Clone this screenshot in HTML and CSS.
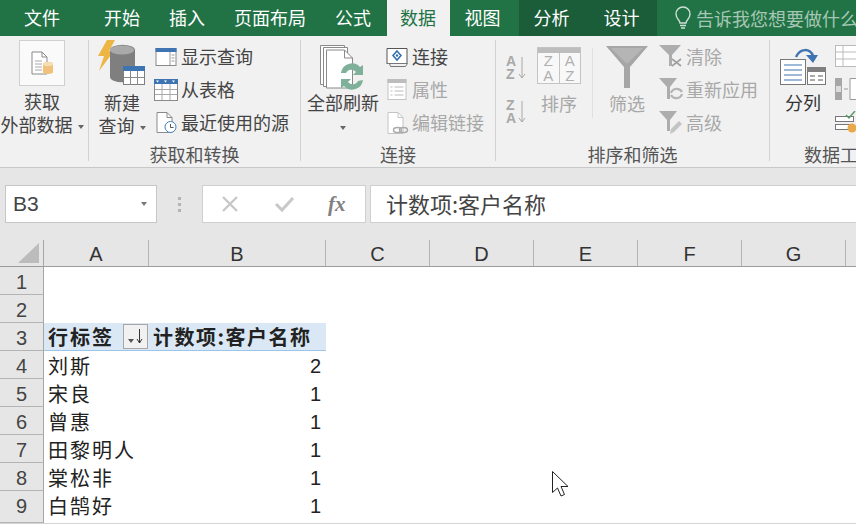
FILE: index.html
```html
<!DOCTYPE html>
<html>
<head>
    <title>数据透视表</title>
    <link rel="stylesheet" href="styles.css">
</head>
<body>
    <div class="tabs">
        <span class="tab tab-file">文件</span>
        <span class="tab">开始</span>
        <span class="tab">插入</span>
        <span class="tab">页面布局</span>
        <span class="tab">公式</span>
        <span class="tab active">数据</span>
        <span class="tab">视图</span>
        <div class="context-tabs">
            <span class="tab">分析</span>
            <span class="tab">设计</span>
        </div>
        <div class="tell-me">
            <svg width="16" height="24" viewBox="0 0 16 24"><path d="M5 17c0-3-4-4-4-9a7 7 0 0 1 14 0c0 5-4 6-4 9z" fill="none" stroke="#cfe0d6" stroke-width="1.4"/><path d="M5 19.500h6M6 22h4" stroke="#cfe0d6" stroke-width="1.600"/></svg>
            <span>告诉我您想要做什么</span>
        </div>
    </div>

    <div class="ribbon">
        <div class="group group-ext">
            <div class="group-body column-center">
                <div class="icon-box">
                    <svg width="24" height="24" viewBox="0 0 24 24"><path d="M2 1h10l5 5v17H2z" fill="#fff" stroke="#8a8a8a"/><path d="M12 1v5h5" fill="none" stroke="#8a8a8a"/><path d="M5 10h7M5 13h7M5 16h7M5 19h7" stroke="#a6a6a6"/><path d="M13 13a5 2 0 0 1 10 0v8a5 2 0 0 1-10 0z" fill="#f0c27b"/><ellipse cx="18" cy="13" rx="5" ry="2" fill="#f7dfb5"/></svg>
                </div>
                <div class="big-label ext-label">获取<br>外部数据<i class="caret"></i></div>
            </div>
        </div>

        <div class="group group-get">
            <div class="group-body">
                <div class="big-button query-button">
                    <svg width="50" height="49" viewBox="0 0 50 49"><path d="M10 0h8l-6 11h5L2 31l5-15H1z" fill="#edb544"/><path d="M13 10a12 5 0 0 1 25 0v27a12 5 0 0 1-25 0z" fill="#7f7f7f"/><ellipse cx="25" cy="10" rx="12" ry="4.500" fill="#a9a9a9"/><rect x="26.500" y="26.500" width="21" height="18" fill="#fff" stroke="#7f7f7f"/><path d="M26 26h22v5H26z" fill="#3f74b2"/><path d="M33.500 31v14M40.500 31v14M27 37.500h20" stroke="#8a8a8a"/></svg>
                    <div class="big-label">新建<br>查询<i class="caret"></i></div>
                </div>
                <div class="small-list">
                    <div class="small-row">
                        <svg width="23" height="20" viewBox="0 0 23 20"><rect x="1.500" y="1.500" width="20" height="17" fill="#fff" stroke="#8a8a8a"/><path d="M1 1h21v4H1z" fill="#3f74b2"/><path d="M15.500 5v13M17 8h3M17 11h3M17 14h3" stroke="#9a9a9a"/></svg>
                        <span>显示查询</span>
                    </div>
                    <div class="small-row">
                        <svg width="24" height="24" viewBox="0 0 24 24"><rect x=".5" y="1.500" width="23" height="21" fill="#fff" stroke="#8a8a8a"/><path d="M0 1h24v5H0z" fill="#3f74b2"/><path d="M2 2.500h3L3.500 4.500zM10 2.500h3l-1.500 2zM18 2.500h3l-1.500 2z" fill="#fff"/><path d="M8 6v16M16 6v16M1 11.500h22M1 16.500h22" stroke="#a8a8a8"/></svg>
                        <span>从表格</span>
                    </div>
                    <div class="small-row">
                        <svg width="23" height="23" viewBox="0 0 23 23"><path d="M2.500 1.500h10l5 5v15h-15z" fill="#fff" stroke="#8a8a8a"/><path d="M12.500 1.500v5h5" fill="none" stroke="#8a8a8a"/><circle cx="16" cy="16" r="5.500" fill="#fff" stroke="#4a7fb5"/><path d="M16 13v3.500h3" fill="none" stroke="#555"/></svg>
                        <span>最近使用的源</span>
                    </div>
                </div>
            </div>
            <div class="group-label">获取和转换</div>
        </div>

        <div class="group group-conn">
            <div class="group-body">
                <div class="big-button refresh-button">
                    <svg width="46" height="46" viewBox="0 0 46 46"><path d="M.5.500h24v39H.5z" fill="#fff" stroke="#8a8a8a"/><path d="M3.500 2.500h24v39h-24z" fill="#fff" stroke="#8a8a8a"/><path d="M6.500 5h18l8 8v30h-26z" fill="#fff" stroke="#8a8a8a"/><path d="M24.500 5v8h8" fill="none" stroke="#8a8a8a"/><path d="M21 32a11 11 0 0 1 19-6l3-2v10h-10l3-3a6 6 0 0 0-10 1z" fill="#7fb09a" transform="translate(0 -4)"/><path d="M43 33a11 11 0 0 1-19 6l-3 2V32h10l-3 3a6 6 0 0 0 10-1z" fill="#7fb09a" transform="translate(0 2)"/></svg>
                    <div class="big-label refresh-label">全部刷新<i class="caret caret-below"></i></div>
                </div>
                <div class="small-list">
                    <div class="small-row">
                        <svg width="23" height="20" viewBox="0 0 23 20"><path d="M1.500 1.500h20v15h-20z" fill="#fff" stroke="#555"/><path d="M1 16.500h21l-2 3H5l-1-3" fill="none" stroke="#777"/><path d="M11.500 4l4 4.500-4 4.500-4-4.500z" fill="none" stroke="#2e6fb0" stroke-width="1.500"/><circle cx="11.500" cy="8.500" r="1.200" fill="#2e6fb0"/></svg>
                        <span>连接</span>
                    </div>
                    <div class="small-row muted">
                        <svg width="23" height="23" viewBox="0 0 23 23"><rect x="2.500" y="1.500" width="18" height="20" fill="#fff" stroke="#c4c4c4"/><path d="M2 1h19v4H2z" fill="#bdbdbd"/><path d="M5 9h2M9 9h9M5 13h2M9 13h9M5 17h2M9 17h9" stroke="#bbb"/></svg>
                        <span>属性</span>
                    </div>
                    <div class="small-row muted">
                        <svg width="23" height="24" viewBox="0 0 23 24"><path d="M2.500 1.500h10l5 5v16h-15z" fill="#fff" stroke="#c4c4c4"/><path d="M12.500 1.500v5h5" fill="none" stroke="#c4c4c4"/><ellipse cx="12" cy="19" rx="4" ry="2.500" fill="none" stroke="#aaa" stroke-width="1.500"/><ellipse cx="18" cy="19" rx="4" ry="2.500" fill="none" stroke="#aaa" stroke-width="1.500"/></svg>
                        <span>编辑链接</span>
                    </div>
                </div>
            </div>
            <div class="group-label">连接</div>
        </div>

        <div class="group group-sort">
            <div class="group-body">
                <div class="az-column">
                    <div class="az-button"><span>A<br>Z</span><svg width="8" height="22" viewBox="0 0 8 22"><path d="M4 0v21M1 17l3 4 3-4" fill="none" stroke="#a8a8a8"/></svg></div>
                    <div class="az-button"><span>Z<br>A</span><svg width="8" height="22" viewBox="0 0 8 22"><path d="M4 0v21M1 17l3 4 3-4" fill="none" stroke="#a8a8a8"/></svg></div>
                </div>
                <div class="big-button sort-button muted">
                    <div class="sort-icon">
                        <div class="sort-head"></div>
                        <div class="sort-cells"><span>Z<br>A</span><span>A<br>Z</span></div>
                    </div>
                    <div class="big-label">排序</div>
                </div>
                <div class="inner-line"></div>
                <div class="big-button filter-button muted">
                    <svg width="42" height="42" viewBox="0 0 42 42"><path d="M0 0h42L24 21v21h-6V21z" fill="#a6a6a6"/><path d="M5 2h32L22 17h-2z" fill="#b5b5b5"/></svg>
                    <div class="big-label">筛选</div>
                </div>
                <div class="small-list filter-list">
                    <div class="small-row muted">
                        <svg width="24" height="23" viewBox="0 0 24 23"><path d="M0 0h22L13 10v11h-3V10z" fill="#adadad"/><path d="M13 14l9 7M22 14l-9 7" stroke="#a0a0a0" stroke-width="1.600"/></svg>
                        <span>清除</span>
                    </div>
                    <div class="small-row muted">
                        <svg width="24" height="23" viewBox="0 0 24 23"><path d="M0 0h18L11 9v12H8V9z" fill="#adadad"/><path d="M12 15a6 6 0 0 1 11-1M23 16a6 6 0 0 1-11 1" fill="none" stroke="#b5b5b5" stroke-width="2.200"/></svg>
                        <span>重新应用</span>
                    </div>
                    <div class="small-row muted">
                        <svg width="24" height="24" viewBox="0 0 24 24"><path d="M0 0h18L11 9v11H8V9z" fill="#adadad"/><path d="M11 23l1-5 8-8 3 3-8 8z" fill="#c4c4c4"/></svg>
                        <span>高级</span>
                    </div>
                </div>
            </div>
            <div class="group-label">排序和筛选</div>
        </div>

        <div class="group group-tools">
            <div class="group-body">
                <div class="big-button split-button">
                    <svg width="46" height="38" viewBox="0 0 46 38"><rect x=".5" y="12.500" width="25" height="25" fill="#fff" stroke="#777"/><path d="M4 18h18M4 23h18M4 28h18M4 33h18" stroke="#3f74b2"/><rect x="27.500" y="20.500" width="18" height="17" fill="#fff" stroke="#777"/><path d="M27 20h19v5H27z" fill="#7f7f7f"/><path d="M30 29h5M38 29h5M30 33h5M38 33h5" stroke="#555"/><path d="M16 10C20 1 30 1 33 9" fill="none" stroke="#3f74b2" stroke-width="2.500"/><path d="M26 8h12l-5 8z" fill="#3f74b2"/></svg>
                    <div class="big-label">分列</div>
                </div>
                <div class="tool-icons">
                    <svg width="22" height="22" viewBox="0 0 22 22"><rect x=".5" y=".5" width="21" height="21" fill="#fff" stroke="#bbb"/><path d="M0 7h22M0 14h22M8 0v22" stroke="#bbb"/></svg>
                    <svg width="22" height="22" viewBox="0 0 22 22"><path d="M0 0h7v22H0z" fill="#a6a6a6"/><path d="M1 8h5v6H1z" fill="#ddd"/><path d="M15 .5h7v21h-7z" fill="#fff" stroke="#999"/><path d="M9 11h4" stroke="#999"/></svg>
                    <svg width="22" height="22" viewBox="0 0 22 22"><rect x=".5" y="5.500" width="18" height="5" fill="#fff" stroke="#777"/><rect x=".5" y="13.500" width="18" height="5" fill="#fff" stroke="#777"/><path d="M11 4l3 3 6-7" fill="none" stroke="#5a9a6a" stroke-width="1.500"/><circle cx="17" cy="17" r="4.500" fill="#e9a94a"/></svg>
                </div>
            </div>
            <div class="group-label">数据工具</div>
        </div>
    </div>

    <div class="formula-band">
        <div class="formula-bar">
            <div class="name-box"><span>B3</span><i class="caret"></i></div>
            <div class="grip"><i></i><i></i><i></i></div>
            <div class="fx-box">
                <svg width="20" height="20" viewBox="0 0 20 20"><path d="M3 3l14 14M17 3L3 17" stroke="#c8c8c8" stroke-width="2.400"/></svg>
                <svg width="22" height="20" viewBox="0 0 22 20"><path d="M3 10l6 6L20 4" fill="none" stroke="#c8c8c8" stroke-width="3"/></svg>
                <span class="fx">fx</span>
            </div>
            <div class="formula-input">计数项:客户名称</div>
        </div>
        <div class="col-head">
            <div class="corner"><svg width="23" height="21" viewBox="0 0 23 21"><path d="M0 21L21 1v20z" fill="#bcbcbc"/></svg></div>
            <div class="col col-a">A</div>
            <div class="col col-b">B</div>
            <div class="col">C</div>
            <div class="col">D</div>
            <div class="col">E</div>
            <div class="col">F</div>
            <div class="col">G</div>
        </div>
    </div>

    <div class="sheet">
        <div class="row"><div class="row-num">1</div></div>
        <div class="row"><div class="row-num">2</div></div>
        <div class="row pivot-head">
            <div class="row-num">3</div>
            <div class="cell cell-a">行标签<span class="drop"><i class="caret"></i><svg width="7" height="15" viewBox="0 0 7 15"><path d="M3.500 0v14M1 10l2.500 4L6 10" fill="none" stroke="#333"/></svg></span></div>
            <div class="cell cell-b">计数项:客户名称</div>
        </div>
        <div class="row"><div class="row-num">4</div><div class="cell cell-a">刘斯</div><div class="cell cell-b num">2</div></div>
        <div class="row"><div class="row-num">5</div><div class="cell cell-a">宋良</div><div class="cell cell-b num">1</div></div>
        <div class="row"><div class="row-num">6</div><div class="cell cell-a">曾惠</div><div class="cell cell-b num">1</div></div>
        <div class="row"><div class="row-num">7</div><div class="cell cell-a">田黎明人</div><div class="cell cell-b num">1</div></div>
        <div class="row"><div class="row-num">8</div><div class="cell cell-a">棠松非</div><div class="cell cell-b num">1</div></div>
        <div class="row row-last"><div class="row-num">9</div><div class="cell cell-a">白鹄好</div><div class="cell cell-b num">1</div></div>
        <div class="sheet-end"></div>
        <svg class="cursor" width="20" height="28" viewBox="0 0 20 28"><path d="M1.500 1.500v21l5-4.500 3.500 8 3.500-1.500-3.500-8h7z" fill="#fff" stroke="#222"/></svg>
    </div>
</body>
</html>
```

FILE: styles.css
```css
html, body {
    margin: 0;
    height: 100%;
    overflow: hidden;
    background: #fff;
    font-family: "Noto Sans CJK SC", "Liberation Sans", sans-serif;
    color: #444;
}

svg {
    display: block;
    flex: none;
}

/* tabs */
.tabs {
    display: flex;
    height: 36px;
    background: #217346;
    color: #fff;
    font-size: 18px;
    line-height: 35px;
}

.tab {
    padding: 0 14.500px;
    flex: none;
}

.tab-file {
    padding: 0 29.500px 0 24px;
}

.tabs .active {
    background: #f1f1f1;
    color: #217346;
    margin-left: 1.500px;
    padding: 0 14px 0 13px;
}

.context-tabs {
    display: flex;
    flex: none;
    background: #1b5c39;
    margin-left: 4px;
    width: 138px;
}

.context-tabs .tab + .tab {
    margin-left: 5px;
}

.tell-me {
    display: flex;
    flex: none;
    align-items: center;
    gap: 5px;
    margin-left: 18px;
    color: #a6c7b4;
    white-space: nowrap;
}

/* ribbon */
.ribbon {
    display: flex;
    height: 132px;
    background: #f1f1f1;
    border-bottom: 1px solid #c8c8c8;
    box-sizing: border-box;
    font-size: 18px;
    line-height: 23px;
    white-space: nowrap;
    overflow: hidden;
}

.group {
    flex: none;
    box-sizing: border-box;
    border-right: 1px solid #d2d2d2;
    margin: 4px 0 6px;
    position: relative;
}

.group-body {
    display: flex;
    height: 103px;
}

.group-label {
    text-align: center;
    color: #555;
    line-height: 22px;
}

.group-ext { width: 89px; }
.group-get { width: 212px; }
.group-conn { width: 195px; }
.group-sort { width: 274px; }
.group-tools { width: 140px; border-right: 0; }

.column-center {
    flex-direction: column;
    align-items: center;
}

.icon-box {
    box-sizing: border-box;
    width: 46px;
    height: 46px;
    margin-right: 4px;
    background: #fafafa;
    border: 1px solid #d0d0d0;
    display: flex;
    align-items: center;
    justify-content: center;
}

.big-button {
    display: flex;
    flex-direction: column;
    align-items: center;
    flex: none;
}

.big-label {
    text-align: center;
}

.ext-label {
    margin-top: 4px;
    margin-right: 4px;
}

.caret {
    display: inline-block;
    width: 0;
    height: 0;
    border-left: 3.500px solid transparent;
    border-right: 3.500px solid transparent;
    border-top: 4px solid #666;
    margin-left: 5px;
    vertical-align: 3px;
}

.caret-below {
    display: block;
    margin: 12px auto 0;
}

.small-list {
    display: flex;
    flex-direction: column;
}

.small-row {
    display: flex;
    align-items: center;
    height: 33px;
    gap: 3px;
}

.small-row svg {
    width: 24px;
}

.query-button {
    width: 54px;
    margin-left: 6px;
    margin-right: 5px;
}

.query-button .big-label {
    margin-top: 2px;
}

.refresh-button {
    width: 76px;
    margin-left: 4px;
    margin-right: 4px;
    padding-top: 5px;
}

.muted {
    color: #a8a8a8;
}

.az-column {
    display: flex;
    flex-direction: column;
    gap: 18px;
    margin: 15px 10px 0 10px;
    width: 21px;
    color: #a8a8a8;
}

.az-button {
    display: flex;
    align-items: center;
    font: bold 14px/13px "Liberation Sans", sans-serif;
}

.az-button span {
    width: 12px;
}

.sort-button {
    width: 44px;
}

.sort-icon {
    box-sizing: border-box;
    width: 44px;
    height: 37px;
    margin-top: 7px;
    background: #f8f8f8;
    border: 1px solid #c4c4c4;
}

.sort-head {
    height: 5px;
    background: #bdbdbd;
}

.sort-cells {
    display: flex;
    font: 15px/15px "Liberation Sans", sans-serif;
    text-align: center;
    color: #b0b0b0;
}

.sort-cells span {
    flex: 1;
}

.sort-cells span + span {
    border-left: 1px solid #c4c4c4;
}

.sort-button .big-label {
    margin-top: 8px;
}

.inner-line {
    width: 1px;
    height: 70px;
    margin: 8px 13px 0 11px;
    background: #e0e0e0;
}

.filter-button {
    width: 42px;
    padding-top: 6px;
}

.filter-button .big-label {
    margin-top: 4px;
}

.filter-list {
    margin-left: 11px;
}

.split-button {
    width: 46px;
    margin-left: 10px;
    padding-top: 7px;
}

.split-button .big-label {
    margin-top: 6px;
    color: #333;
}

.tool-icons {
    display: flex;
    flex-direction: column;
    gap: 11px;
    margin: 5px 0 0 9px;
}

/* formula bar */
.formula-band {
    height: 99px;
    background: #e6e6e6;
    box-sizing: border-box;
    padding-top: 17px;
}

.formula-bar {
    display: flex;
    height: 38px;
}

.name-box {
    box-sizing: border-box;
    width: 152px;
    margin-left: 5px;
    background: #fff;
    border: 1px solid #c6c6c6;
    display: flex;
    align-items: center;
    justify-content: space-between;
    padding: 0 9px 0 7px;
    font: 21px "Liberation Sans", sans-serif;
    color: #444;
}

.name-box .caret {
    border-top-color: #777;
}

.grip {
    width: 45px;
    display: flex;
    flex-direction: column;
    align-items: center;
    justify-content: center;
    gap: 3px;
}

.grip i {
    width: 3px;
    height: 3px;
    background: #b4b4b4;
}

.fx-box {
    box-sizing: border-box;
    width: 164px;
    background: #fff;
    border: 1px solid #d0d0d0;
    display: flex;
    align-items: center;
    padding-left: 17px;
    gap: 33px;
}

.fx {
    font: italic bold 21px "Liberation Serif", serif;
    color: #808080;
}

.formula-input {
    flex: 1;
    box-sizing: border-box;
    margin-left: 4px;
    background: #fff;
    border: 1px solid #d0d0d0;
    border-right: 0;
    padding-left: 15px;
    font-size: 22px;
    line-height: 35px;
    color: #444;
}

/* column heads */
.col-head {
    display: flex;
    height: 27px;
    margin-top: 17px;
    box-sizing: border-box;
    border-bottom: 1px solid #9c9c9c;
    font: 20px/28px "Liberation Sans", sans-serif;
    color: #333;
}

.corner {
    box-sizing: border-box;
    width: 44px;
    border-right: 1px solid #a6a6a6;
    display: flex;
    justify-content: flex-end;
    align-items: flex-end;
    padding: 0 2px 3px 0;
}

.col {
    box-sizing: border-box;
    width: 104px;
    flex: none;
    text-align: center;
    border-right: 1px solid #b4b4b4;
}

.col-a {
    width: 105px;
}

.col-b {
    width: 177px;
}

/* sheet */
.sheet {
    position: relative;
    flex: 1;
}

.row {
    display: flex;
    height: 28px;
    box-sizing: border-box;
    font-size: 20px;
    line-height: 30px;
    letter-spacing: 2px;
    color: #222;
    white-space: nowrap;
}

.row-last {
    height: 32px;
}

.row-num {
    box-sizing: border-box;
    width: 44px;
    flex: none;
    background: #e6e6e6;
    border-right: 1px solid #a6a6a6;
    border-bottom: 1px solid #b4b4b4;
    text-align: center;
    font: 20px/30px "Liberation Sans", sans-serif;
    letter-spacing: 0;
    color: #444;
}

.cell {
    box-sizing: border-box;
    flex: none;
}

.cell-a {
    width: 105px;
    padding-left: 4px;
    display: flex;
    align-items: flex-start;
}

.cell-b {
    width: 177px;
    padding-left: 4px;
}

.num {
    text-align: right;
    font: 20px/30px "Liberation Sans", sans-serif;
    letter-spacing: 0;
    padding-right: 5px;
}

.pivot-head .cell {
    background: #dae8f5;
    border-bottom: 1px solid #9dc3e6;
    font-weight: bold;
    line-height: 28px;
}

.pivot-head .cell-b {
    letter-spacing: 1.500px;
}

.drop {
    box-sizing: border-box;
    width: 25px;
    height: 25px;
    margin: 1px 0 0 9px;
    background: #f1f1f1;
    border: 1px solid #a6a6a6;
    display: flex;
    align-items: center;
    justify-content: center;
    gap: 2px;
    letter-spacing: 0;
}

.drop .caret {
    margin: 8px 0 0;
    border-top-color: #555;
}

.sheet-end {
    height: 2px;
    background: #d4d4d4;
}

.cursor {
    position: absolute;
    left: 551px;
    top: 203px;
}
```
